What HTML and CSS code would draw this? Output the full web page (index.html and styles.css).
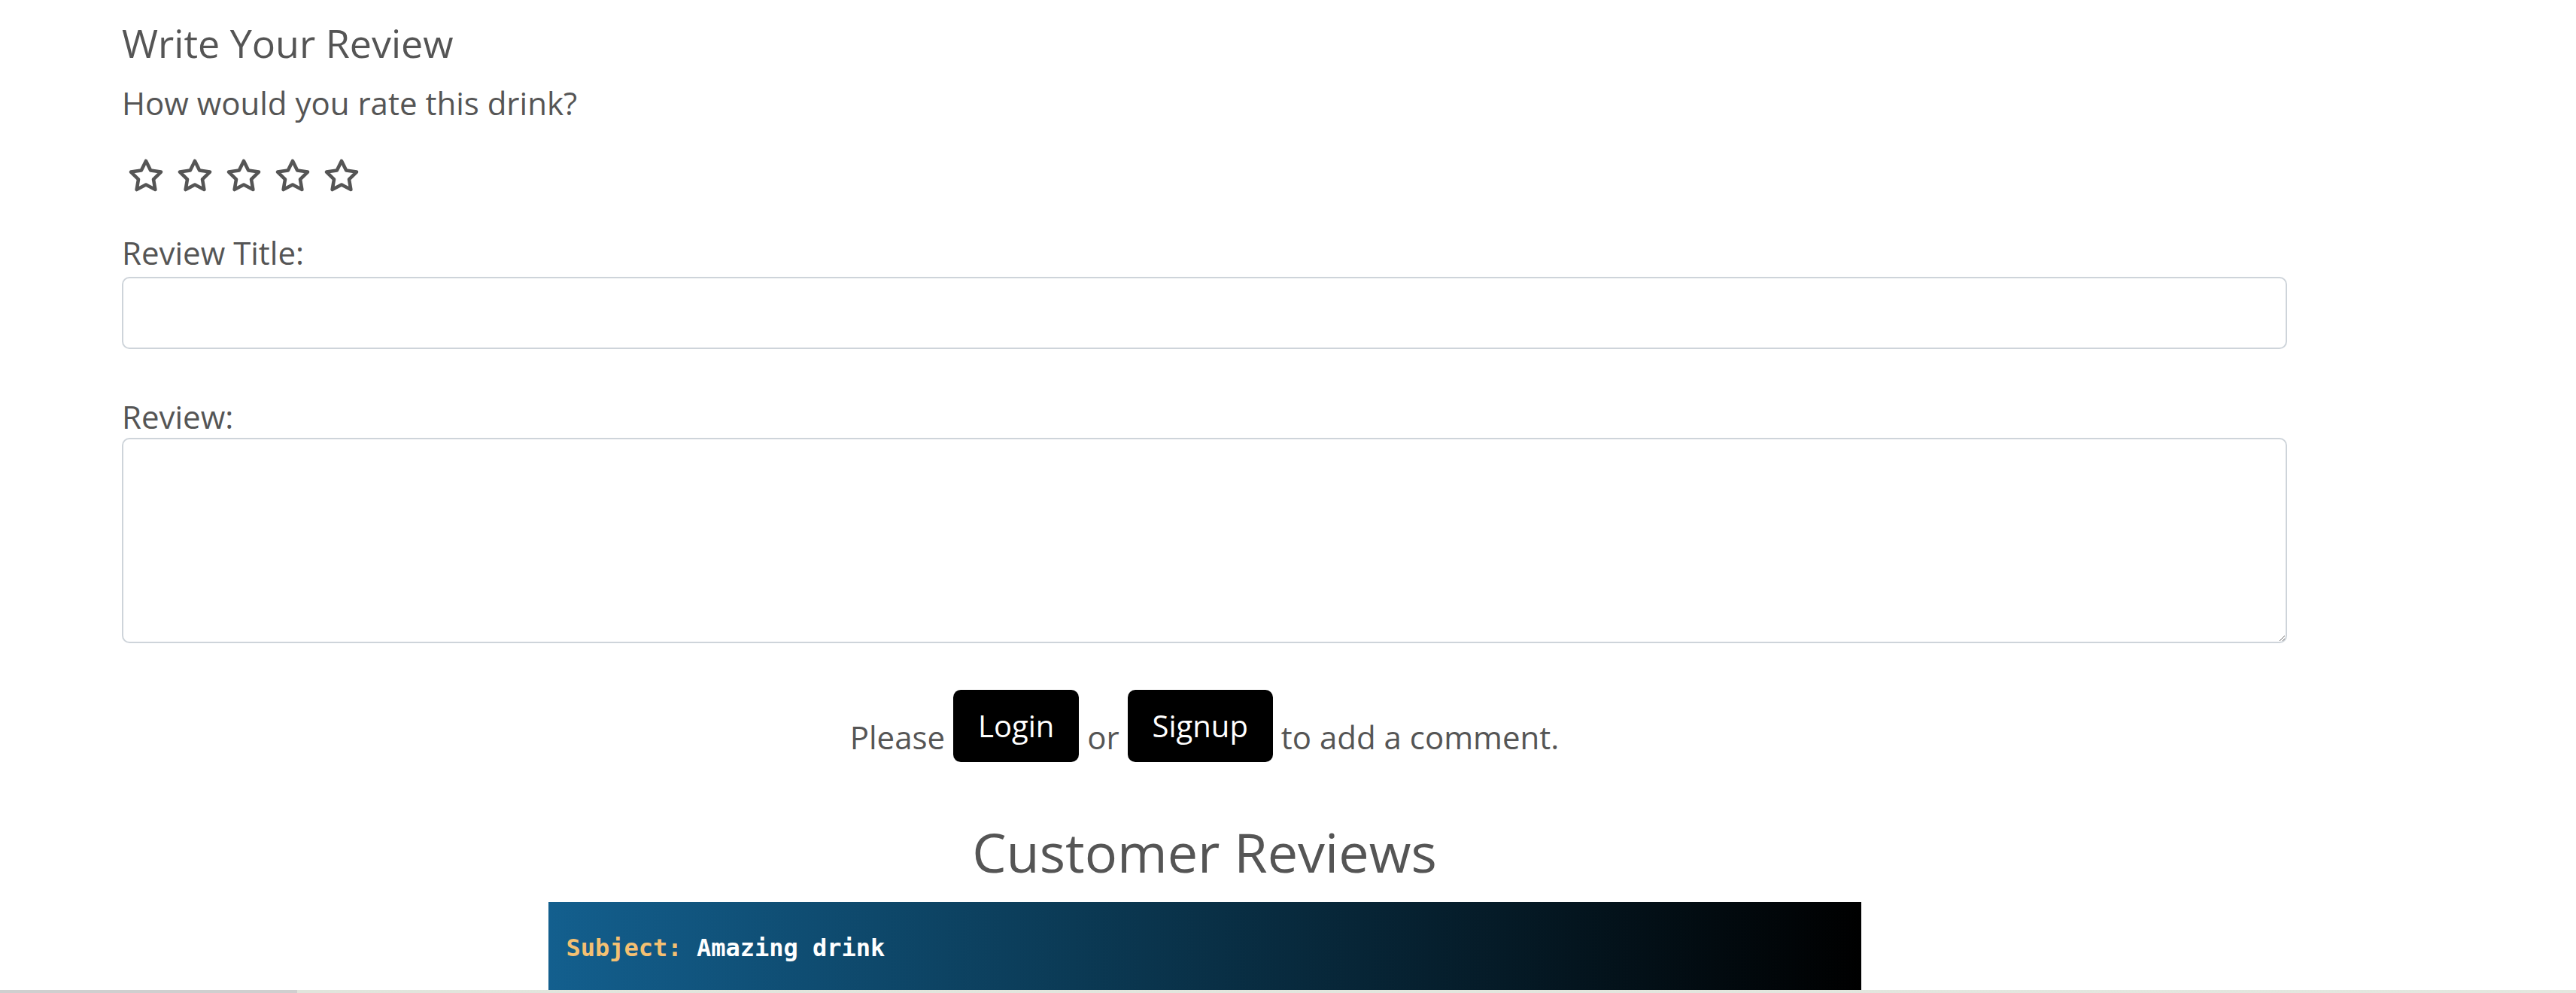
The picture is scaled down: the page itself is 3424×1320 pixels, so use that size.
FILE: index.html
```html
<!DOCTYPE html>
<html lang="en">
<head>
<meta charset="utf-8">
<title>Write Your Review</title>
<link rel="stylesheet" href="styles.css">
</head>
<body>
<main class="page">
  <section class="review-form">
    <h3 class="form-title">Write Your Review</h3>
    <p class="rate-q">How would you rate this drink?</p>
    <div class="stars">
      <svg class="star" viewBox="0 0 24 24"><path d="M12 2l3.09 6.26L22 9.27l-5 4.87 1.18 6.88L12 17.77l-6.18 3.25L7 14.14 2 9.27l6.91-1.01L12 2z"/></svg>
      <svg class="star" viewBox="0 0 24 24"><path d="M12 2l3.09 6.26L22 9.27l-5 4.87 1.18 6.88L12 17.77l-6.18 3.25L7 14.14 2 9.27l6.91-1.01L12 2z"/></svg>
      <svg class="star" viewBox="0 0 24 24"><path d="M12 2l3.09 6.26L22 9.27l-5 4.87 1.18 6.88L12 17.77l-6.18 3.25L7 14.14 2 9.27l6.91-1.01L12 2z"/></svg>
      <svg class="star" viewBox="0 0 24 24"><path d="M12 2l3.09 6.26L22 9.27l-5 4.87 1.18 6.88L12 17.77l-6.18 3.25L7 14.14 2 9.27l6.91-1.01L12 2z"/></svg>
      <svg class="star" viewBox="0 0 24 24"><path d="M12 2l3.09 6.26L22 9.27l-5 4.87 1.18 6.88L12 17.77l-6.18 3.25L7 14.14 2 9.27l6.91-1.01L12 2z"/></svg>
    </div>
    <label class="field-label label-title" for="title">Review Title:</label>
    <input class="field-input" id="title" type="text">
    <label class="field-label label-review" for="review">Review:</label>
    <textarea class="field-area" id="review"></textarea>
    <p class="auth-line">Please <a class="btn" href="#">Login</a> or <a class="btn" href="#">Signup</a> to add a comment.</p>
    <h2 class="reviews-title">Customer Reviews</h2>
    <div class="review-card">
      <p class="subject"><span class="subject-key">Subject:</span> Amazing drink</p>
    </div>
  </section>
</main>
<footer class="footer"></footer>
</body>
</html>
```

FILE: styles.css
```css
html, body {
  margin: 0;
  padding: 0;
  background: #fff;
}
body {
  font-family: "Open Sans", "Noto Sans", sans-serif;
  color: #555;
  overflow: hidden;
  height: 1320px;
  display: flex;
  flex-direction: column;
}
.page {
  padding: 26px 0 0 162px;
}
.review-form {
  width: 2878px;
  display: flex;
  flex-direction: column;
}
.form-title {
  font-size: 52px;
  line-height: 62px;
  font-weight: 400;
  margin: 0;
}
.rate-q {
  font-size: 42px;
  line-height: 50px;
  margin: 24px 0 0;
}
.stars {
  display: flex;
  gap: 17px;
  margin: 48px 0 0 8px;
}
.star {
  width: 48px;
  height: 48px;
  fill: none;
  stroke: #555;
  stroke-width: 2.3;
  stroke-linejoin: round;
  stroke-linecap: round;
}
.field-label {
  font-size: 42px;
  line-height: 50px;
}
.label-title {
  margin-top: 53px;
}
.field-input {
  margin-top: 7px;
  height: 96px;
  box-sizing: border-box;
  border: 2px solid #ced4da;
  border-radius: 10px;
  font: inherit;
  background: #fff;
}
.label-review {
  margin-top: 65px;
}
.field-area {
  display: block;
  margin-top: 3px;
  height: 273px;
  box-sizing: border-box;
  border: 2px solid #ced4da;
  border-radius: 10px;
  font: inherit;
  background: #fff;
}
.auth-line {
  margin: 62px 0 0;
  text-align: center;
  font-size: 42px;
  line-height: 50px;
}
.btn {
  display: inline-block;
  vertical-align: 16px;
  background: #000;
  color: #fff;
  text-decoration: none;
  font-size: 40px;
  line-height: 56px;
  padding: 20px 33px;
  border-radius: 10px;
}
.reviews-title {
  margin: 76px 0 0;
  text-align: center;
  font-size: 72px;
  line-height: 86px;
  font-weight: 400;
}
.review-card {
  align-self: center;
  width: 1745px;
  height: 117px;
  margin-top: 24px;
  box-sizing: border-box;
  padding: 41px 24px 0;
  background: linear-gradient(90deg, #135f8e 0%, #0b3a55 40%, #000 100%);
}
.subject {
  margin: 0;
  font-family: "DejaVu Sans Mono", "Liberation Mono", monospace;
  font-weight: 700;
  font-size: 32px;
  line-height: 40px;
  color: #fff;
}
.subject-key {
  color: #f4c072;
}
.footer {
  flex: 1;
  background: linear-gradient(90deg, #cfcfcf 0, #cfcfcf 395px, #e1e5dc 395px, #e3e7df 100%);
}
```
